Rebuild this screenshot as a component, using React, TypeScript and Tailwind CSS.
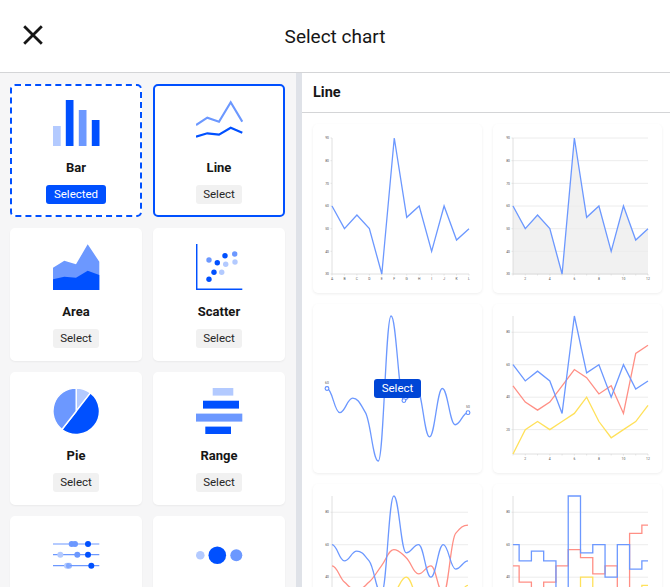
import React from "react";

const DARK = "#0050ff";
const MID = "#6c98ff";
const LIGHT = "#b3caff";

const BLUE = [60, 50, 56, 50, 30, 90, 55, 60, 40, 60, 45, 50];
const RED = [47, 37, 32, 37, 47, 57, 52, 42, 47, 30, 67, 72];
const YELLOW = [5, 20, 25, 20, 25, 30, 40, 25, 15, 20, 25, 35];

type Pt = [number, number];

function linePath(pts: Pt[]) {
  return pts.map((p, i) => `${i ? "L" : "M"}${p[0]} ${p[1]}`).join(" ");
}

function stepPath(pts: Pt[]) {
  let d = `M${pts[0][0]} ${pts[0][1]}`;
  for (let i = 1; i < pts.length; i++) {
    const mid = (pts[i - 1][0] + pts[i][0]) / 2;
    d += ` H${mid} V${pts[i][1]} H${pts[i][0]}`;
  }
  return d;
}

function smoothPath(pts: Pt[]) {
  const slope = pts.map((_, i) => {
    if (i === 0 || i === pts.length - 1) return 0;
    const a = pts[i][1] - pts[i - 1][1];
    const b = pts[i + 1][1] - pts[i][1];
    if (a * b <= 0) return 0;
    return (2 * a * b) / (a + b);
  });
  let d = `M${pts[0][0]} ${pts[0][1]}`;
  for (let i = 1; i < pts.length; i++) {
    const third = (pts[i][0] - pts[i - 1][0]) * 0.42;
    d += ` C${pts[i - 1][0] + third} ${pts[i - 1][1] + slope[i - 1] * 0.42} ${pts[i][0] - third} ${pts[i][1] - slope[i] * 0.42} ${pts[i][0]} ${pts[i][1]}`;
  }
  return d;
}

type Series = { values: number[]; color: string };

type ChartProps = {
  series: Series[];
  kind?: "line" | "smooth" | "step";
  x0?: number;
  x1?: number;
  top?: number;
  bottom?: number;
  max?: number;
  min?: number;
  yTicks: number[];
  xLabels?: string[];
  grid?: boolean;
  area?: boolean;
};

function Chart({
  series,
  kind = "line",
  x0 = 20,
  x1 = 155,
  top = 12,
  bottom = 150,
  max = 90,
  min = 5,
  yTicks,
  xLabels = ["", "2", "", "4", "", "6", "", "8", "", "10", "", "12"],
  grid = true,
  area = false
}: ChartProps) {
  const sx = (i: number) => x0 + (i * (x1 - x0)) / 11;
  const sy = (v: number) => top + ((max - v) * (bottom - top)) / (max - min);
  const build = kind === "smooth" ? smoothPath : kind === "step" ? stepPath : linePath;

  return (
    <svg viewBox="0 0 169 169" className="h-full w-full">
      {area && (
        <path
          d={`${linePath(series[0].values.map((v, i) => [sx(i), sy(v)] as Pt))} L${x1} ${bottom} L${x0} ${bottom} Z`}
          fill="#f1f1f1"
        />
      )}
      {yTicks.map((t) => (
        <g key={t}>
          {grid && <line x1={x0} x2={x1} y1={sy(t)} y2={sy(t)} stroke="#ececec" strokeWidth="1" />}
          <line x1={x0 - 1.5} x2={x0} y1={sy(t)} y2={sy(t)} stroke="#d5d5d5" strokeWidth="0.6" />
          <text x={x0 - 3} y={sy(t) + 1.2} textAnchor="end" fontSize="3.4" fill="#555555">
            {t}
          </text>
        </g>
      ))}
      <line x1={x0} x2={x0} y1={top} y2={bottom} stroke="#d8d8d8" strokeWidth="0.8" />
      <line x1={x0} x2={x1} y1={bottom} y2={bottom} stroke="#d8d8d8" strokeWidth="0.8" />
      {xLabels.map((label, i) => (
        <g key={i}>
          <line x1={sx(i)} x2={sx(i)} y1={bottom} y2={bottom + 1.5} stroke="#d5d5d5" strokeWidth="0.6" />
          {label && (
            <text x={sx(i)} y={bottom + 5.5} textAnchor="middle" fontSize="3.4" fill="#555555">
              {label}
            </text>
          )}
        </g>
      ))}
      {series.map((s) => (
        <path
          key={s.color}
          d={build(s.values.map((v, i) => [sx(i), sy(v)] as Pt))}
          fill="none"
          stroke={s.color}
          strokeWidth="1.3"
        />
      ))}
    </svg>
  );
}

function SmoothSingle() {
  const sx = (i: number) => 14 + (i * 141) / 11;
  const sy = (v: number) => 12 + ((90 - v) * 145) / 60;
  const pts = BLUE.map((v, i) => [sx(i), sy(v)] as Pt);
  return (
    <svg viewBox="0 0 169 169" className="h-full w-full">
      <path d={smoothPath(pts)} fill="none" stroke="#6c98ff" strokeWidth="1.3" />
      {[0, 6, 11].map((i) => (
        <circle key={i} cx={pts[i][0]} cy={pts[i][1]} r="1.9" fill="#ffffff" stroke="#5c8cff" strokeWidth="1.1" />
      ))}
      <text x={pts[0][0]} y={pts[0][1] - 5} textAnchor="middle" fontSize="3.4" fill="#555555">
        60
      </text>
      <text x={pts[11][0]} y={pts[11][1] - 5} textAnchor="middle" fontSize="3.4" fill="#555555">
        50
      </text>
    </svg>
  );
}

function BarIcon() {
  return (
    <svg viewBox="0 0 47 46" className="h-[46px] w-[47px]">
      <rect x="0" y="26" width="7.7" height="20" fill={LIGHT} />
      <rect x="12.8" y="0" width="7.7" height="46" fill={DARK} />
      <rect x="25.8" y="10" width="7.7" height="36" fill={MID} />
      <rect x="38.8" y="20" width="7.7" height="26" fill={DARK} />
    </svg>
  );
}

function LineIcon() {
  return (
    <svg viewBox="0 0 47 46" className="h-[46px] w-[47px]">
      <polyline points="0,25 11.3,17.7 23,21.7 34.7,2.3 46.3,21.7" fill="none" stroke={MID} strokeWidth="2.2" />
      <polyline points="0,36.7 11.3,33.3 23,34.7 34.7,27.7 46.3,32.7" fill="none" stroke={DARK} strokeWidth="2.2" />
    </svg>
  );
}

function AreaIcon() {
  return (
    <svg viewBox="0 0 47 46" className="h-[46px] w-[47px]">
      <polygon points="0,23.7 11.3,16.7 23,20.3 34.7,0.3 46.3,17.7 46.3,46 0,46" fill={MID} />
      <polygon points="0,35.3 11.3,32.7 23,33.7 34.7,26.7 46.3,31 46.3,46 0,46" fill={DARK} />
    </svg>
  );
}

function ScatterIcon() {
  const dots: [number, number, string][] = [
    [13, 35.3, DARK],
    [18, 28.3, DARK],
    [21.3, 18.7, DARK],
    [29, 11.7, DARK],
    [13, 16, MID],
    [38.7, 10, MID],
    [25.7, 28.3, LIGHT],
    [29.7, 20.3, LIGHT],
    [39, 18, LIGHT]
  ];
  return (
    <svg viewBox="0 0 47 46" className="h-[46px] w-[47px]">
      <polyline points="0.7,0 0.7,45.2 46.3,45.2" fill="none" stroke={DARK} strokeWidth="1.5" />
      {dots.map(([x, y, c]) => (
        <circle key={`${x}-${y}`} cx={x} cy={y} r="2.7" fill={c} />
      ))}
    </svg>
  );
}

function PieIcon() {
  return (
    <svg viewBox="0 0 47 46" className="h-[46px] w-[47px]">
      <path d="M23.2 23.2 L23.2 0 A23.2 23.2 0 0 1 37.5 4.9 Z" fill={LIGHT} stroke="#ffffff" strokeWidth="1.4" />
      <path d="M23.2 23.2 L37.5 4.9 A23.2 23.2 0 0 1 8.9 41.5 Z" fill={DARK} stroke="#ffffff" strokeWidth="1.4" />
      <path d="M23.2 23.2 L8.9 41.5 A23.2 23.2 0 0 1 23.2 0 Z" fill={MID} stroke="#ffffff" strokeWidth="1.4" />
    </svg>
  );
}

function RangeIcon() {
  return (
    <svg viewBox="0 0 47 46" className="h-[46px] w-[47px]">
      <rect x="16.7" y="0" width="20.6" height="7.6" fill={LIGHT} />
      <rect x="7" y="12.7" width="36" height="7.9" fill={DARK} />
      <rect x="0" y="25.6" width="46.3" height="8" fill={MID} />
      <rect x="9.3" y="38.6" width="25.7" height="7.7" fill={DARK} />
    </svg>
  );
}

function SliderIcon() {
  return (
    <svg viewBox="0 0 47 46" className="h-[46px] w-[47px]">
      {[12, 22.7, 33.7].map((y) => (
        <line key={y} x1="0" x2="46.3" y1={y} y2={y} stroke={MID} strokeWidth="1.2" />
      ))}
      <circle cx="18.7" cy="12" r="3" fill={MID} />
      <circle cx="22" cy="12" r="3" fill={MID} />
      <circle cx="35" cy="12" r="3" fill={DARK} />
      <circle cx="7.3" cy="22.7" r="3" fill={LIGHT} />
      <circle cx="24.3" cy="22.7" r="3" fill={MID} />
      <circle cx="35" cy="22.7" r="3" fill={DARK} />
      <circle cx="14" cy="33.7" r="3" fill={LIGHT} />
      <circle cx="16" cy="33.7" r="3" fill={MID} opacity="0.7" />
      <circle cx="38.3" cy="33.7" r="3" fill={DARK} />
    </svg>
  );
}

function DotsIcon() {
  return (
    <svg viewBox="0 0 47 46" className="h-[46px] w-[47px]">
      <circle cx="4.3" cy="23.3" r="4.3" fill={LIGHT} />
      <circle cx="21.3" cy="23.3" r="8.8" fill={DARK} />
      <circle cx="40.3" cy="23.3" r="6" fill={MID} />
    </svg>
  );
}

type ChartTypeCardProps = {
  name?: string;
  icon: React.ReactNode;
  state?: "selected" | "active";
};

function ChartTypeCard({ name, icon, state }: ChartTypeCardProps) {
  const border =
    state === "selected"
      ? "border-dashed border-[#0050ff]"
      : state === "active"
        ? "border-solid border-[#0050ff]"
        : "border-solid border-white shadow-[0_1px_2px_rgba(0,0,0,0.05)]";
  return (
    <div className={`flex h-[133px] flex-col items-center rounded-[5px] border-2 bg-white pt-[14px] ${border}`}>
      {icon}
      {name && <div className="mt-[12px] text-[13px] leading-[20px] font-bold text-[#161616]">{name}</div>}
      {state === "selected" && (
        <div className="mt-[7px] flex h-[19px] w-[60px] items-center justify-center rounded-[3px] bg-[#0050ff] pt-px text-[11.5px] text-white">
          Selected
        </div>
      )}
      {name && state !== "selected" && (
        <div className="mt-[7px] flex h-[19px] w-[46px] items-center justify-center rounded-[3px] bg-[#f1f1f1] pt-px text-[11.5px] text-[#262626]">
          Select
        </div>
      )}
    </div>
  );
}

function ChartCard({ children }: { children: React.ReactNode }) {
  return (
    <div className="relative h-[169px] rounded-[5px] bg-white shadow-[0_1px_3px_rgba(0,0,0,0.07)]">{children}</div>
  );
}

export default function App() {
  const letters = ["A", "B", "C", "D", "E", "F", "G", "H", "I", "J", "K", "L"];
  const none = Array.from({ length: 12 }, () => "");
  const three: Series[] = [
    { values: YELLOW, color: "#ffe15a" },
    { values: RED, color: "#ff8f85" },
    { values: BLUE, color: "#6c98ff" }
  ];

  return (
    <div className="flex h-[587px] w-[670px] flex-col overflow-hidden bg-white font-['Roboto',sans-serif]">
      <header className="relative flex h-[73px] shrink-0 items-center justify-center border-b border-[#d4d5d7] bg-white">
        <button className="absolute top-[25px] left-[23px] text-[#161616]">
          <svg viewBox="0 0 20 20" className="block h-[20px] w-[20px]">
            <path d="M1.2 1.2 L18.8 18.8 M18.8 1.2 L1.2 18.8" stroke="currentColor" strokeWidth="2.8" fill="none" />
          </svg>
        </button>
        <h1 className="text-[19px] leading-none font-normal text-[#161616]">Select chart</h1>
      </header>

      <div className="flex min-h-0 flex-1">
        <aside className="w-[296px] shrink-0 overflow-hidden bg-[#f6f6f7] pt-[11px] pl-[10px]">
          <div className="grid grid-cols-[132px_132px] gap-[11px]">
            <ChartTypeCard name="Bar" icon={<BarIcon />} state="selected" />
            <ChartTypeCard name="Line" icon={<LineIcon />} state="active" />
            <ChartTypeCard name="Area" icon={<AreaIcon />} />
            <ChartTypeCard name="Scatter" icon={<ScatterIcon />} />
            <ChartTypeCard name="Pie" icon={<PieIcon />} />
            <ChartTypeCard name="Range" icon={<RangeIcon />} />
            <ChartTypeCard icon={<SliderIcon />} />
            <ChartTypeCard icon={<DotsIcon />} />
          </div>
        </aside>

        <div className="w-[6px] shrink-0 bg-[#dfe2e8]" />

        <main className="min-w-0 flex-1 overflow-hidden bg-white">
          <div className="flex h-[40px] items-center border-b border-[#d4d5d7] pl-[11px] text-[14.5px] font-bold text-[#161616]">
            Line
          </div>
          <div className="grid grid-cols-[169px_169px] gap-[11px] pt-[11px] pl-[11px]">
            <ChartCard>
              <Chart
                series={[{ values: BLUE, color: "#6c98ff" }]}
                x0={19}
                x1={156}
                top={14}
                max={90}
                min={30}
                yTicks={[90, 80, 70, 60, 50, 40, 30]}
                xLabels={letters}
                grid={false}
              />
            </ChartCard>
            <ChartCard>
              <Chart
                series={[{ values: BLUE, color: "#6c98ff" }]}
                top={14}
                max={90}
                min={30}
                yTicks={[90, 80, 70, 60, 50, 40, 30]}
                area
              />
            </ChartCard>
            <ChartCard>
              <SmoothSingle />
              <button className="absolute top-[75px] left-[61px] flex h-[19px] w-[47px] items-center justify-center rounded-[3px] bg-[#0046d6] text-[11.5px] text-white">
                Select
              </button>
            </ChartCard>
            <ChartCard>
              <Chart series={three} yTicks={[80, 60, 40, 20]} />
            </ChartCard>
            <ChartCard>
              <Chart series={three} kind="smooth" x0={19} yTicks={[80, 60, 40]} xLabels={none} />
            </ChartCard>
            <ChartCard>
              <Chart series={three} kind="step" yTicks={[80, 60, 40]} xLabels={none} />
            </ChartCard>
          </div>
        </main>
      </div>
    </div>
  );
}
